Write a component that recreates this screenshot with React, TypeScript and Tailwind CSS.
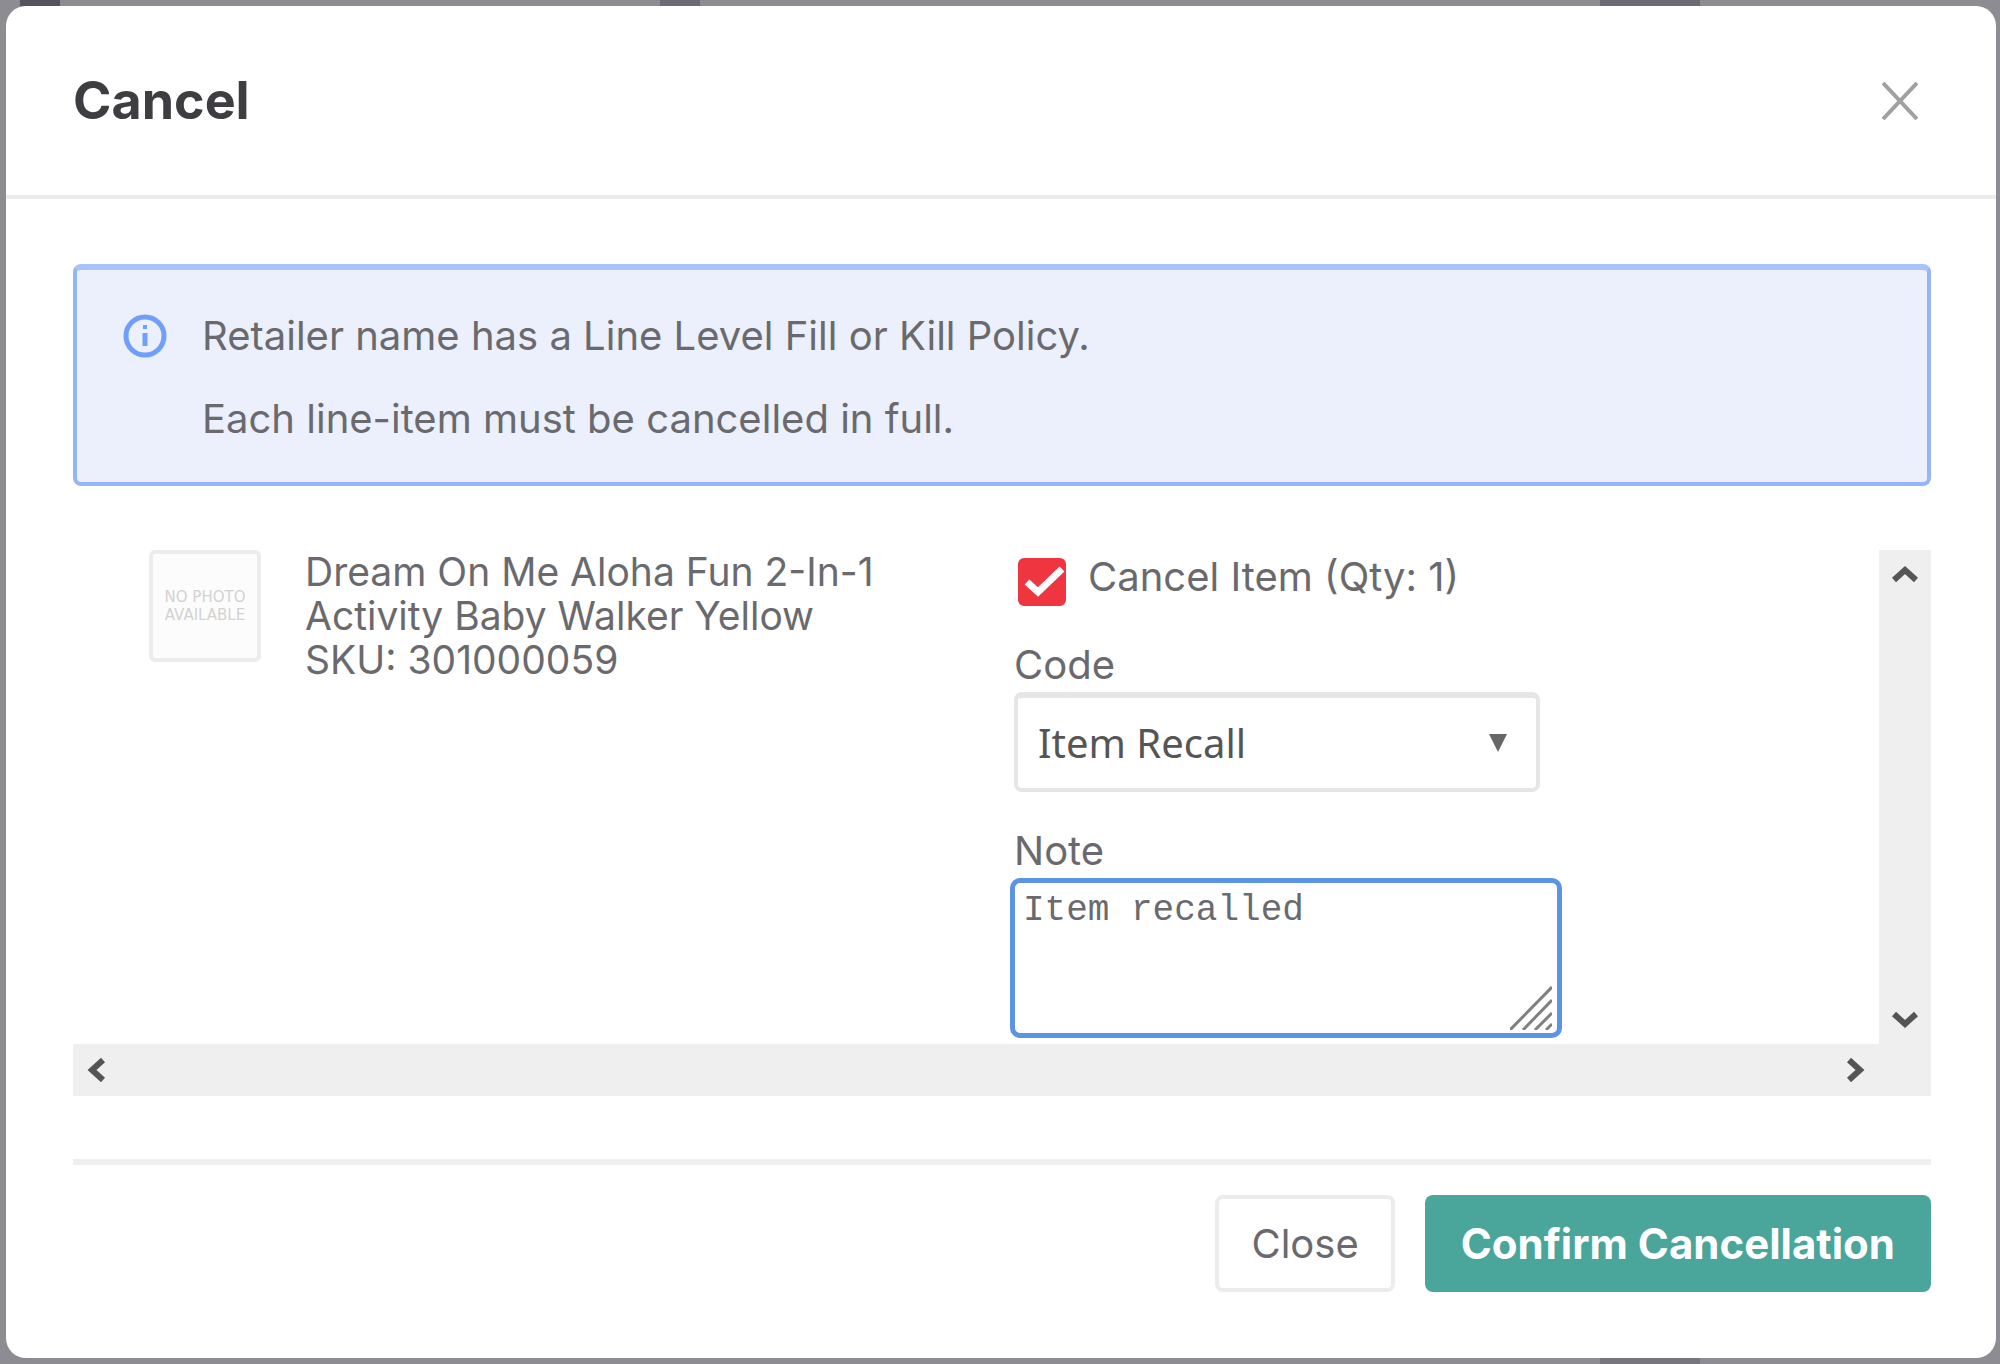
import { useState } from "react";
import type { ReactNode } from "react";

type Direction = "up" | "down" | "left" | "right";

const chevrons: Record<Direction, string> = {
  up: "M3 16 L14 6 L25 16",
  down: "M3 8 L14 18 L25 8",
  left: "M18 2 L7 12 L18 22",
  right: "M10 2 L21 12 L10 22",
};

function ScrollButton({ direction }: { direction: Direction }) {
  return (
    <button
      type="button"
      aria-label={`Scroll ${direction}`}
      className="flex size-[52px] shrink-0 items-center justify-center"
    >
      <svg width="28" height="24" viewBox="0 0 28 24" fill="none" stroke="#555" strokeWidth="6">
        <path d={chevrons[direction]} />
      </svg>
    </button>
  );
}

function InfoIcon() {
  return (
    <svg className="mt-[5px] size-[44px] shrink-0" viewBox="0 0 44 44" fill="none" stroke="#6f9ffa">
      <circle cx="22" cy="22" r="19" strokeWidth="5" />
      <path d="M22 19 V32" strokeWidth="5" />
      <path d="M22 11 V15" strokeWidth="4" />
    </svg>
  );
}

function Notice({ children }: { children: ReactNode }) {
  return (
    <div
      role="note"
      className="flex gap-[35px] rounded-[8px] border-4 border-t-[6px] border-[#94b5f9] border-t-[#a9c3f8] bg-[#ebf0fc] px-[46px] pt-[39px] pb-[36px]"
    >
      <InfoIcon />
      <div className="flex flex-col gap-[29px] text-[40px] leading-[54px]">{children}</div>
    </div>
  );
}

/* Slivers of the dimmed page that show above and below the dialog. */
function BackdropTop() {
  return (
    <div className="flex h-[6px]" aria-hidden="true">
      <span className="w-[1%]" />
      <span className="w-[2%] bg-[#55545c]" />
      <span className="w-[30%]" />
      <span className="w-[2%] bg-[#6c6b73]" />
      <span className="w-[45%]" />
      <span className="w-[5%] bg-[#6c6b73]" />
    </div>
  );
}

function BackdropBottom() {
  return (
    <div className="flex h-[6px]" aria-hidden="true">
      <span className="w-[80%]" />
      <span className="w-[5%] bg-[#77767e]" />
    </div>
  );
}

export default function App() {
  const [checked, setChecked] = useState(true);
  const [note, setNote] = useState("Item recalled");

  return (
    <div className="flex min-h-screen flex-col bg-[#8d8c92] font-['Inter',sans-serif] text-[#6a6a6e]">
      <BackdropTop />
      <section
        role="dialog"
        aria-labelledby="dialog-title"
        className="mr-[4px] ml-[6px] flex flex-1 flex-col rounded-[20px] bg-white"
      >
        <header className="flex items-center justify-between border-b-4 border-[#ececec] py-[62px] pr-[78px] pl-[67px]">
          <h1 id="dialog-title" className="text-[52px] leading-[65px] font-bold text-[#3d3d42]">
            Cancel
          </h1>
          <button type="button" aria-label="Close dialog">
            <svg width="36" height="38" viewBox="0 0 36 38" fill="none" stroke="#a0a0a0" strokeWidth="4">
              <path d="M1 1 L35 37 M35 1 L1 37" />
            </svg>
          </button>
        </header>

        <div className="pt-[65px] pr-[65px] pl-[67px]">
          <Notice>
            <p>Retailer name has a Line Level Fill or Kill Policy.</p>
            <p>Each line-item must be cancelled in full.</p>
          </Notice>

          <div className="mt-[64px] grid grid-cols-[1fr_auto]">
            <div className="grid grid-cols-2 pb-[6px]">
              <div className="flex items-start gap-[44px] pl-[76px]">
                <div className="flex size-[112px] shrink-0 flex-col items-center justify-center rounded-[6px] border-4 border-[#ececec] bg-[#fcfcfc] text-center font-['DejaVu_Sans',sans-serif] text-[15px] leading-[18px] text-[#d2d2d2]">
                  <span>NO PHOTO</span>
                  <span>AVAILABLE</span>
                </div>
                <div className="text-[39px] leading-[44px]">
                  <p>Dream On Me Aloha Fun 2-In-1</p>
                  <p>Activity Baby Walker Yellow</p>
                  <p>SKU: 301000059</p>
                </div>
              </div>

              <div className="flex flex-col items-start pl-[34px] text-[40px]">
                <label className="ml-[8px] flex gap-[22px] leading-[54px]">
                  <span className="relative mt-[8px] size-[48px]">
                    <input
                      type="checkbox"
                      checked={checked}
                      onChange={(e) => setChecked(e.target.checked)}
                      className="block size-[48px] appearance-none rounded-[6px] border-4 border-[#ee3540] checked:bg-[#ee3540]"
                    />
                    {checked && (
                      <svg
                        className="pointer-events-none absolute inset-0"
                        viewBox="0 0 48 48"
                        fill="none"
                        stroke="white"
                        strokeWidth="7"
                      >
                        <path d="M9 24 L20 34 L44 11" />
                      </svg>
                    )}
                  </span>
                  Cancel Item (Qty: 1)
                </label>

                <label htmlFor="code" className="mt-[32px] ml-[4px] leading-[54px]">
                  Code
                </label>
                <div className="relative ml-[4px]">
                  <select
                    id="code"
                    className="block h-[100px] w-[526px] appearance-none rounded-[8px] border-4 border-t-[6px] border-[#e6e6e6] bg-white px-[20px] font-['Noto_Sans',sans-serif] text-[40px] text-[#555]"
                  >
                    <option>Item Recall</option>
                  </select>
                  <svg
                    className="pointer-events-none absolute top-[42px] right-[32px]"
                    width="20"
                    height="18"
                    viewBox="0 0 20 18"
                    fill="#666"
                  >
                    <path d="M1 0 H19 L10 18 Z" />
                  </svg>
                </div>

                <label htmlFor="note" className="mt-[32px] ml-[4px] leading-[54px]">
                  Note
                </label>
                <div className="relative">
                  <textarea
                    id="note"
                    value={note}
                    onChange={(e) => setNote(e.target.value)}
                    className="block h-[160px] w-[552px] resize-none rounded-[10px] border-[5px] border-[#5c94e4] px-[8px] py-[6px] font-['Liberation_Mono',monospace] text-[36px] leading-[44px] outline-none"
                  />
                  <svg
                    className="pointer-events-none absolute right-[10px] bottom-[8px]"
                    width="42"
                    height="44"
                    viewBox="0 0 42 44"
                    stroke="#808080"
                    strokeWidth="3"
                  >
                    <path d="M0 44 L42 1 M13 44 L42 14 M25 44 L42 27 M36 44 L42 38" />
                  </svg>
                </div>
              </div>
            </div>
            <div className="flex flex-col justify-between bg-[#efefef]">
              <ScrollButton direction="up" />
              <ScrollButton direction="down" />
            </div>
            <div className="flex justify-between bg-[#efefef]">
              <ScrollButton direction="left" />
              <ScrollButton direction="right" />
            </div>
            <div className="bg-[#efefef]" />
          </div>

          <footer className="mt-[63px] flex justify-end gap-[30px] border-t-[6px] border-[#efefef] pt-[30px]">
            <button
              type="button"
              className="h-[97px] rounded-[8px] border-4 border-[#ececec] bg-white px-[32px] text-[40px]"
            >
              Close
            </button>
            <button
              type="button"
              className="h-[97px] rounded-[8px] bg-[#4aa59b] px-[36px] text-[42px] font-bold text-white"
            >
              Confirm Cancellation
            </button>
          </footer>
        </div>
      </section>
      <BackdropBottom />
    </div>
  );
}
